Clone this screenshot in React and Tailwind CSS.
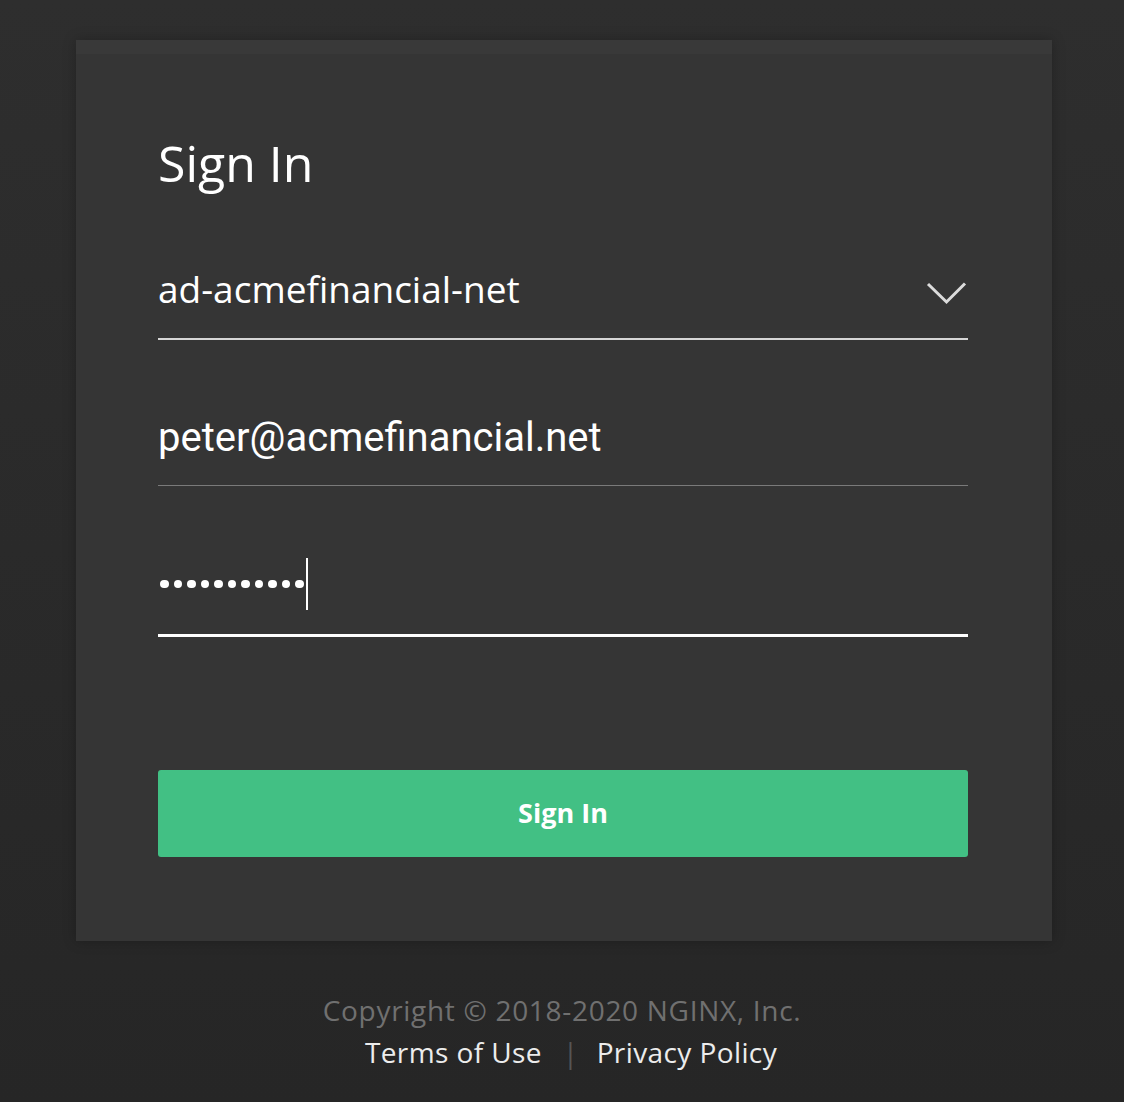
const Dots = () => {
  return (
    <div className="flex items-center gap-[5px]">
      {Array.from({ length: 11 }).map((_, i) => (
        <span key={i} className="block w-[8.5px] h-[8.5px] rounded-full bg-white" />
      ))}
    </div>
  )
}

const App = () => {
  return (
    <div className="min-h-screen w-full bg-gradient-to-b from-[#2e2e2e] to-[#262626] pt-[40px]" style={{ fontFamily: '"Open Sans", sans-serif' }}>

      <div className="ml-[76px] w-[976px] bg-[#353535] border-t-[14px] border-[#393939] pl-[82px] pr-[84px] pt-[84px] pb-[84px] shadow-[0_0_12px_rgba(0,0,0,0.25)]">

        <h1 className="text-[50px] leading-[50px] text-white font-normal">Sign In</h1>

        <div className="mt-[83px] flex items-start justify-between border-b-2 border-[#d6d6d6] pb-[31px]">
          <span className="text-[37px] leading-[36px] text-white">ad-acmefinancial-net</span>
          <svg className="mt-[9px]" width="43" height="26" viewBox="0 0 43 26" fill="none">
            <polyline points="3,4 21.5,22 40,3.5" stroke="#dcdcdc" strokeWidth="3" />
          </svg>
        </div>

        <div className="mt-[78px] border-b border-[#7a7a7a] pb-[27px]">
          <span className="block text-[40px] leading-[40px] text-white" style={{ fontFamily: 'Roboto, sans-serif' }}>peter@acmefinancial.net</span>
        </div>

        <div className="mt-[72px] border-b-[3px] border-white pb-[24px]">
          <div className="flex items-center h-[52px] pl-[2px]">
            <Dots />
            <span className="block w-[2px] h-[52px] bg-white ml-[2px]" />
          </div>
        </div>

        <button className="mt-[133px] w-full h-[87px] rounded-[3px] bg-[#42c084] text-white text-[27px] font-bold">
          Sign In
        </button>

      </div>

      <div className="mt-[55px] flex flex-col items-center text-[28px] leading-[28px]">
        <p className="text-[#707070] tracking-[0.7px]">Copyright © 2018-2020 NGINX, Inc.</p>
        <div className="mt-[14px] ml-[18px] flex items-center text-[#ececec] tracking-[0.4px]">
          <a href="">Terms of Use</a>
          <span className="ml-[21px] text-[#555]">|</span>
          <a href="" className="ml-[18px]">Privacy Policy</a>
        </div>
      </div>

    </div>
  )
}

export default App
